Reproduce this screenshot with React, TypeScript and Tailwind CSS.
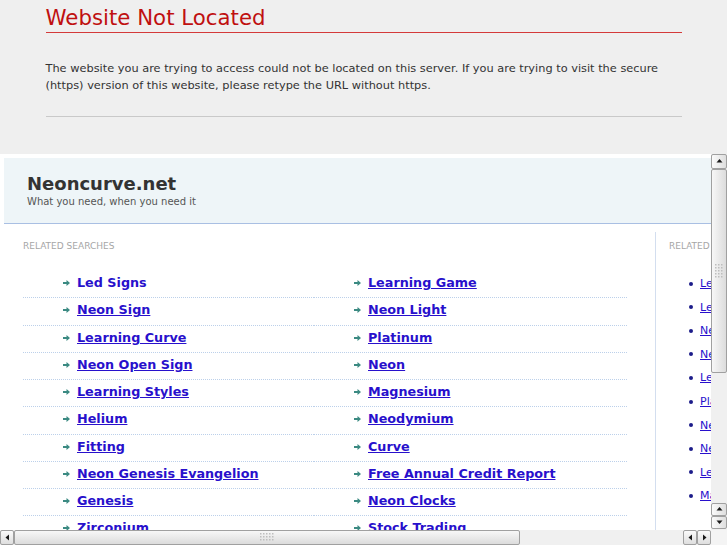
import React from "react";

const leftLinks = [
  "Led Signs",
  "Neon Sign",
  "Learning Curve",
  "Neon Open Sign",
  "Learning Styles",
  "Helium",
  "Fitting",
  "Neon Genesis Evangelion",
  "Genesis",
  "Zirconium",
];

const rightLinks = [
  "Learning Game",
  "Neon Light",
  "Platinum",
  "Neon",
  "Magnesium",
  "Neodymium",
  "Curve",
  "Free Annual Credit Report",
  "Neon Clocks",
  "Stock Trading",
];

// sidebar repeats both columns, interleaved
const sideLinks = leftLinks.flatMap((l, i) => [l, rightLinks[i]]).slice(0, 10);

function Arrow() {
  return (
    <svg width="7" height="6" viewBox="0 0 7 6" className="shrink-0">
      <path d="M0 2h3.5V0L7 3 3.5 6V4H0z" fill="#3b8a82" />
    </svg>
  );
}

const arrowPaths = {
  up: "M1.5 5.5h6L4.5 2z",
  down: "M1.5 2.5h6L4.5 6z",
  left: "M6 1.5v6L2.5 4.5z",
  right: "M3 1.5v6l3.5-3z",
};

function ScrollButton({ dir, className }: { dir: keyof typeof arrowPaths; className: string }) {
  const vertical = dir === "up" || dir === "down";
  return (
    <div
      className={`flex shrink-0 items-center justify-center rounded-[2px] border border-[#a0a0a0] ${
        vertical ? "bg-gradient-to-r" : "bg-gradient-to-b"
      } from-[#fbfbfb] to-[#dedede] ${className}`}
    >
      <svg width="9" height="9" viewBox="0 0 9 9">
        <path d={arrowPaths[dir]} fill="#1a1a1a" />
      </svg>
    </div>
  );
}

function Grip({ vertical }: { vertical?: boolean }) {
  const dots = [];
  const cols = vertical ? 3 : 5;
  const rows = vertical ? 5 : 3;
  for (let r = 0; r < rows; r++) {
    for (let c = 0; c < cols; c++) {
      dots.push(<rect key={`${r}-${c}`} x={c * 3} y={r * 3} width="1.5" height="1.5" fill="#bdbdbd" />);
    }
  }
  return (
    <svg width={cols * 3} height={rows * 3} viewBox={`0 0 ${cols * 3} ${rows * 3}`}>
      {dots}
    </svg>
  );
}

function FramePage() {
  return (
    <div className="w-[948px] bg-white p-[4px]">
      <header className="h-[66px] border-b border-[#a9bfe3] bg-[#eef5f8] pl-[23px] pt-[16px]">
        <div className="text-[18px] font-bold leading-[20px] text-[#333]">Neoncurve.net</div>
        <div className="mt-[2px] text-[10px] leading-[12px] text-[#555]">What you need, when you need it</div>
      </header>

      <div className="flex pt-[8px]">
        <section className="ml-[19px] w-[604px]">
          <h2 className="mt-[9px] text-[9px] leading-[11px] text-[#a6a6a6]">RELATED SEARCHES</h2>
          <ul className="mt-[19px] grid grid-cols-[291px_313px]">
            {leftLinks.flatMap((l, i) => [l, rightLinks[i]]).map((item, i) => (
              <li
                key={item}
                className="flex h-[27.25px] items-center border-b border-dotted border-[#bcd0ea] pb-[2px] pl-[40px]"
              >
                <Arrow />
                <a
                  href="#"
                  className={`ml-[7px] text-[12.75px] font-bold leading-[16px] text-[#2810cc] ${
                    i === 0 ? "no-underline" : "underline"
                  }`}
                >
                  {item}
                </a>
              </li>
            ))}
          </ul>
        </section>

        <aside className="ml-[28px] w-[260px] border-l border-[#d3deef] pl-[13px]">
          <h2 className="mt-[9px] text-[9px] leading-[11px] text-[#a6a6a6]">RELATED</h2>
          <ul className="mt-[20px] pb-[40px]">
            {sideLinks.map((item) => (
              <li key={item} className="flex h-[23.55px] items-center pl-[20px]">
                <span className="h-[4px] w-[4px] shrink-0 rounded-full bg-[#1c1c8a]" />
                <a href="#" className="ml-[7px] text-[11px] leading-[13px] text-[#2810cc] underline">
                  {item}
                </a>
              </li>
            ))}
          </ul>
        </aside>
      </div>
    </div>
  );
}

export default function App() {
  return (
    <div className="h-[545px] w-[727px] overflow-hidden bg-[#efefef] font-['DejaVu_Sans',sans-serif]">
      <div className="h-[154px]">
        <div className="mx-auto w-[636px] pt-[6px]">
          <h1 className="border-b border-[#d43a3a] pb-[2px] text-[21.3px] font-normal leading-[24px] text-[#c01010]">
            Website Not Located
          </h1>
          <p className="mt-[27px] text-[11.35px] leading-[17px] text-[#333]">
            The website you are trying to access could not be located on this server. If you are trying to visit the
            secure (https) version of this website, please retype the URL without https.
          </p>
          <div className="mt-[22px] h-[1px] bg-[#c9c9c9]" />
        </div>
      </div>

      <div className="grid h-[391px] grid-cols-[711px_16px] grid-rows-[376px_15px] bg-white">
        <div className="overflow-hidden">
          <FramePage />
        </div>

        <div className="flex flex-col bg-[#f0f0f0]">
          <ScrollButton dir="up" className="h-[15px]" />
          <div className="flex h-[204px] shrink-0 items-center justify-center rounded-[2px] border border-[#a0a0a0] bg-gradient-to-r from-[#f7f7f7] to-[#dcdcdc]">
            <Grip vertical />
          </div>
          <div className="flex-1" />
          <ScrollButton dir="up" className="h-[13px]" />
          <ScrollButton dir="down" className="mb-[1px] h-[13px]" />
        </div>

        <div className="flex bg-[#f0f0f0]">
          <ScrollButton dir="left" className="w-[14px]" />
          <div className="flex w-[506px] shrink-0 items-center justify-center rounded-[2px] border border-[#a0a0a0] bg-gradient-to-b from-[#f7f7f7] to-[#dcdcdc]">
            <Grip />
          </div>
          <div className="flex-1" />
          <ScrollButton dir="left" className="w-[14px]" />
          <ScrollButton dir="right" className="w-[14px]" />
        </div>

        <div className="bg-[#f4f4f4]" />
      </div>
    </div>
  );
}
